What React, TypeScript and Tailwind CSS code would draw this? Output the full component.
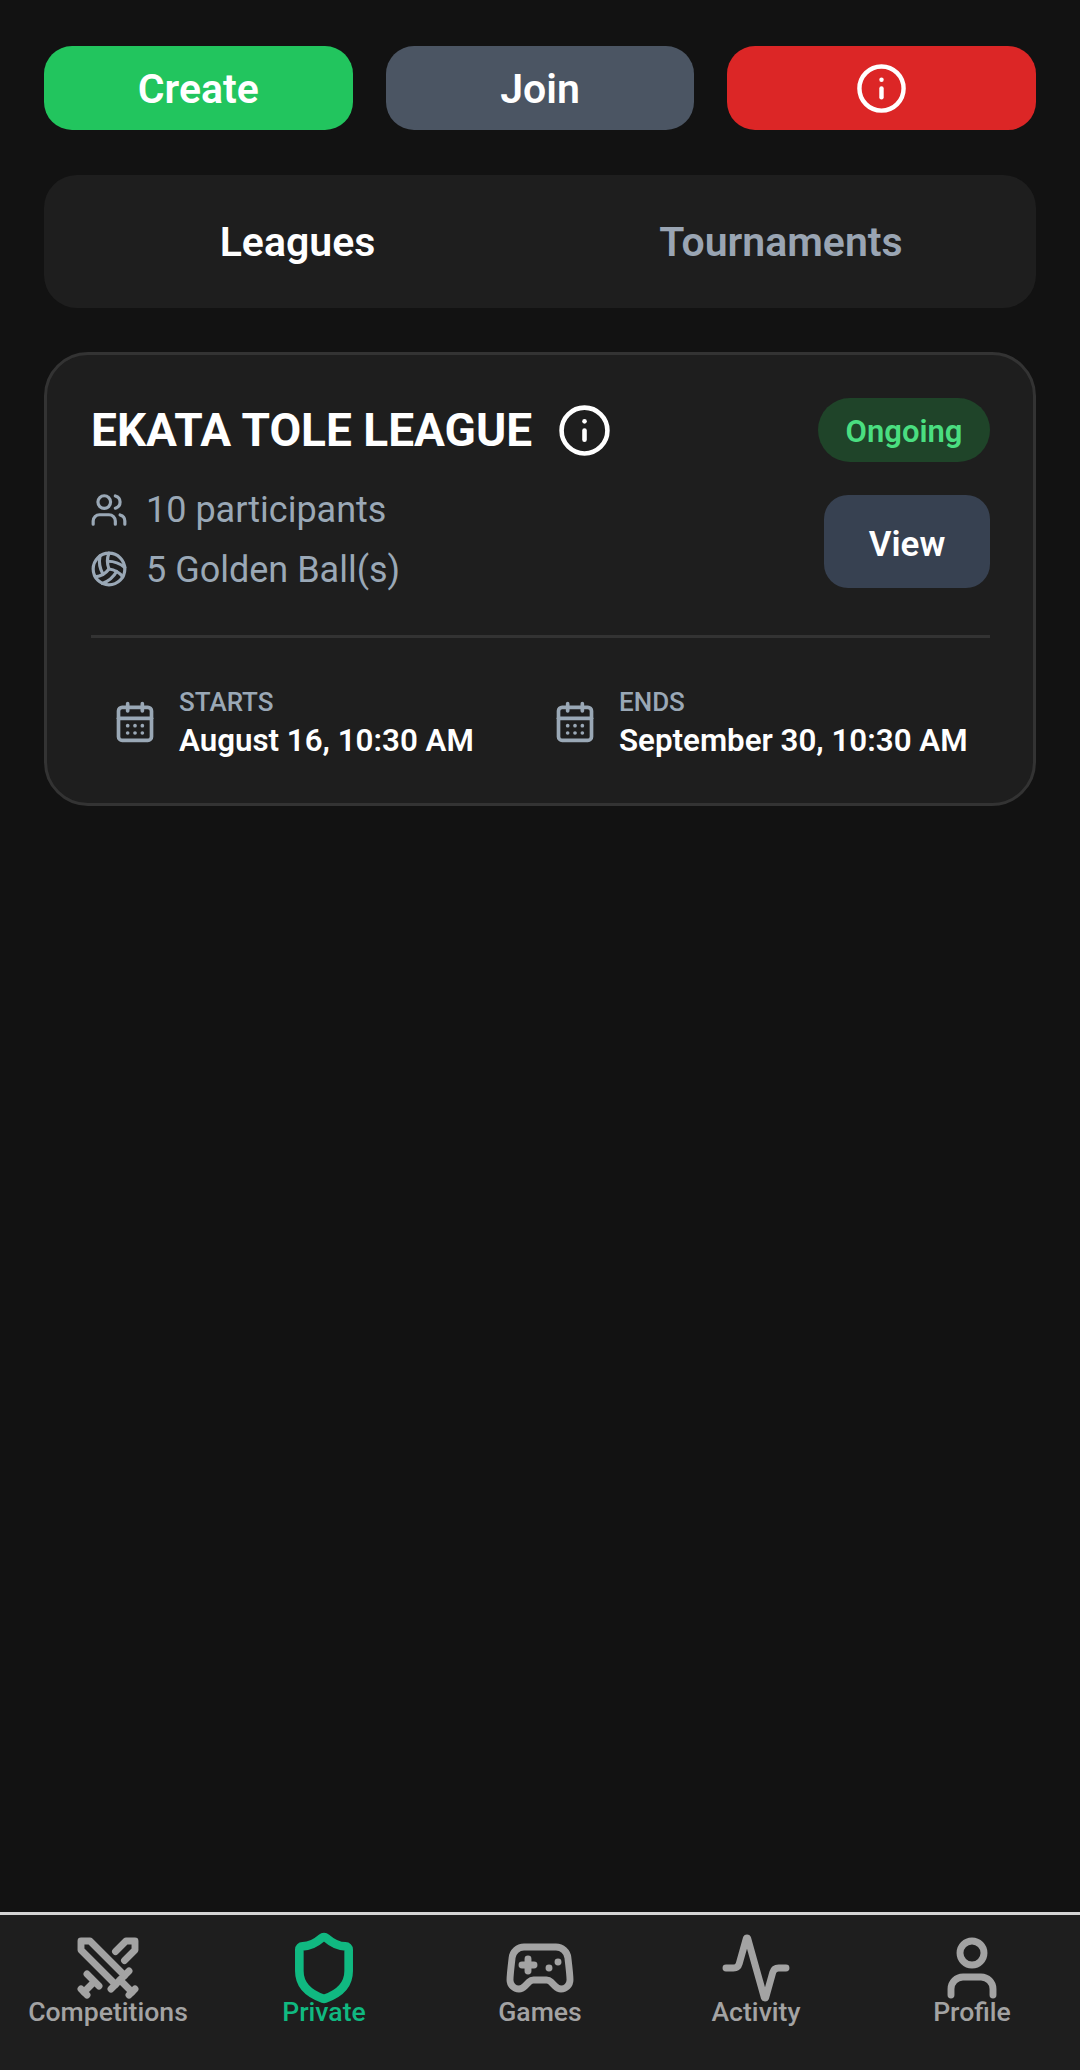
import { Info, Users, Volleyball, CalendarDays, Swords, Shield, Gamepad2, Activity, User } from "lucide-react";

const navItems = [
  { label: "Competitions", Icon: Swords, active: false },
  { label: "Private", Icon: Shield, active: true },
  { label: "Games", Icon: Gamepad2, active: false },
  { label: "Activity", Icon: Activity, active: false },
  { label: "Profile", Icon: User, active: false },
];

function DateBlock({ label, value, wide }: { label: string; value: string; wide?: boolean }) {
  return (
    <div className={`flex items-center gap-[22px] ${wide ? "w-[440px] shrink-0" : ""}`}>
      <CalendarDays size={44} strokeWidth={2} className="text-[#9aa8b6] shrink-0 -mt-[5px]" />
      <div className="flex flex-col">
        <span className="text-[26px] leading-[33px] font-medium text-[#9aa8b6]">{label}</span>
        <span className="text-[31.3px] leading-[44px] font-semibold text-white whitespace-nowrap">{value}</span>
      </div>
    </div>
  );
}

export default function App() {
  return (
    <div className="h-[2070px] w-[1080px] flex flex-col bg-[#121212] font-['Roboto',sans-serif] overflow-hidden">
      <main className="flex-1 px-[44px] pt-[46px]">
        <div className="grid grid-cols-3 gap-[33px]">
          <button className="h-[84px] pt-[3px] rounded-[28px] bg-[#22c55e] text-white text-[41px] font-semibold">Create</button>
          <button className="h-[84px] pt-[3px] rounded-[28px] bg-[#4b5563] text-white text-[41px] font-semibold">Join</button>
          <button className="h-[84px] rounded-[28px] bg-[#dc2626] text-white flex items-center justify-center">
            <Info size={53} strokeWidth={2} />
          </button>
        </div>

        <div className="mt-[45px] h-[133px] pt-[2px] rounded-[33px] bg-[#1e1e1e] grid grid-cols-2 items-center text-center text-[41px] font-semibold">
          <span className="text-white pl-[11px]">Leagues</span>
          <span className="text-[#9aa5b3] pr-[14px]">Tournaments</span>
        </div>

        <div className="mt-[44px] h-[454px] rounded-[44px] bg-[#1e1e1e] border-[3px] border-[#333333] pl-[44px] pr-[43px] pt-[43px]">
          <div className="flex justify-between">
            <div className="flex flex-col">
              <div className="flex items-center h-[64px] gap-[25px] pt-[1px]">
                <span className="text-[46px] font-bold text-white whitespace-nowrap">EKATA TOLE LEAGUE</span>
                <Info size={55} strokeWidth={2} className="text-white" />
              </div>
              <div className="flex items-center gap-[18px] mt-[18px] h-[60px]">
                <Users size={38} strokeWidth={2} className="text-[#9aa8b6] -ml-[1px]" />
                <span className="text-[36px] text-[#9aa8b6]">10 participants</span>
              </div>
              <div className="flex items-center gap-[18px] h-[60px]">
                <Volleyball size={38} strokeWidth={2} className="text-[#9aa8b6] -ml-[1px] -mt-[3px]" />
                <span className="text-[36px] text-[#9aa8b6]">5 Golden Ball(s)</span>
              </div>
            </div>
            <div className="flex flex-col items-end">
              <span className="h-[64px] w-[172px] rounded-full bg-[#1f4429] text-[#4ade80] text-[31px] font-semibold flex items-center justify-center pt-[4px]">Ongoing</span>
              <button className="mt-[33px] h-[93px] w-[166px] pt-[7px] rounded-[24px] bg-[#374151] text-white text-[35px] font-semibold">View</button>
            </div>
          </div>
          <div className="mt-[35px] h-[3px] bg-[#333333]" />
          <div className="mt-[48px] flex pl-[22px]">
            <DateBlock wide label="STARTS" value="August 16, 10:30 AM" />
            <DateBlock label="ENDS" value="September 30, 10:30 AM" />
          </div>
        </div>
      </main>

      <nav className="h-[158px] bg-[#1e1e1e] border-t-[3px] border-[#d4d4d4] grid grid-cols-5 pt-[18px]">
        {navItems.map(({ label, Icon, active }) => (
          <div key={label} className={`flex flex-col items-center ${active ? "text-[#10b981]" : "text-[#a3a3a3]"}`}>
            <div className="h-[71px] flex items-center justify-center -mt-[1px]">
              <Icon size={active ? 74 : 72} strokeWidth={active ? 2.8 : 2.3} className="shrink-0" />
            </div>
            <span className="text-[26.6px] leading-[30px] font-medium -mt-[6px]">{label}</span>
          </div>
        ))}
      </nav>
    </div>
  );
}
